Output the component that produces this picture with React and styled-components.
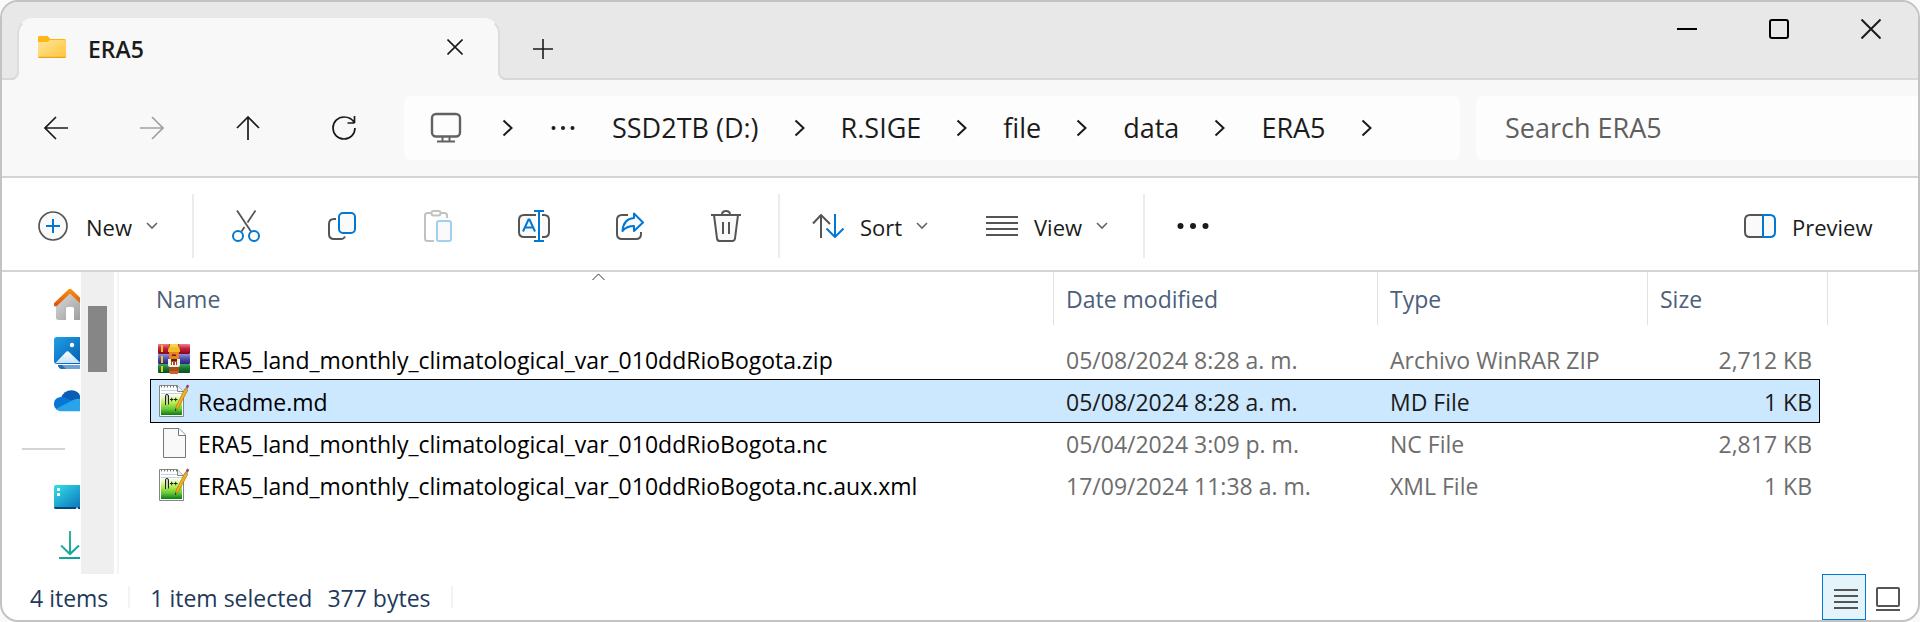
import React from "react";
import styled, { createGlobalStyle, css } from "styled-components";

const font = '"Open Sans", "Noto Sans", sans-serif';
const ink = "#1b1b1b";
const grey = "#555555";
const blue = "#0078d4";

const GlobalStyle = createGlobalStyle`
  *, *::before, *::after { box-sizing: border-box; }
  body { margin: 0; background: #fafafa; font: 22px/30px ${font}; color: ${ink}; }
  button, input { font: inherit; color: inherit; border: 0; padding: 0; background: none; }
  svg { display: block; flex: none; fill: none; }
`;

const Window = styled.div`
  display: flex;
  flex-direction: column;
  min-height: 100vh;
  border: 2px solid #c3c3c3;
  border-radius: 18px;
  background: #fff;
  overflow: hidden;
`;

/* Title bar */
const TitleBar = styled.header`
  display: flex;
  height: 78px;
  padding: 16px 1px 0 15px;
  background: #e8e8e8;
  box-shadow: inset 0 -2px 0 #d8d8d8;
`;

const Tab = styled.div`
  position: relative;
  display: flex;
  align-items: center;
  width: 483px;
  padding: 0 35px 6px 19px;
  background: #f8f8f8;
  border: 2px solid #dcdcdc;
  border-top-color: #f8f8f8;
  border-bottom: 0;
  border-radius: 16px 16px 0 0;

  &::before,
  &::after {
    content: "";
    position: absolute;
    bottom: 0;
    width: 10px;
    height: 10px;
    border-bottom: 2px solid #d8d8d8;
  }
  &::before {
    left: -10px;
    border-right: 2px solid #dcdcdc;
    border-bottom-right-radius: 8px;
    box-shadow: 3px 3px 0 #f8f8f8;
  }
  &::after {
    right: -10px;
    border-left: 2px solid #dcdcdc;
    border-bottom-left-radius: 8px;
    box-shadow: -3px 3px 0 #f8f8f8;
  }
`;

const TabTitle = styled.span`
  flex: 1;
  padding: 4px 0 0 22px;
  font-size: 23px;
  font-weight: 600;
`;

const IconButton = styled.button`
  display: flex;
  align-items: center;
  justify-content: center;
  width: ${(p) => p.$width || 96}px;
  color: ${(p) => p.$color || ink};
`;

const WindowControls = styled.div`
  display: flex;
  align-items: center;
  height: 22px;
  margin-left: auto;
`;

/* Navigation bar */
const NavBar = styled.nav`
  display: flex;
  height: 98px;
  padding: 16px 0 16px 6px;
  background: #f8f8f8;
  border-bottom: 2px solid #d4d4d4;
`;

const AddressBar = styled.div`
  display: flex;
  flex: 1;
  align-items: center;
  gap: 35px;
  margin: 0 16px 0 12px;
  padding-left: 25px;
  background: #fdfdfd;
  border-radius: 8px;
`;

const Crumb = styled.button`
  font-size: 27px;
  line-height: 36px;
  white-space: nowrap;
`;

const SearchBox = styled.input`
  width: 442px;
  padding-left: 29px;
  background: #fdfdfd;
  border-radius: 8px 0 0 8px;
  font-size: 27px;
  &::placeholder { color: #5f5f5f; opacity: 1; }
`;

/* Command bar */
const CommandBar = styled.div`
  display: flex;
  align-items: center;
  height: 94px;
  padding: 4px 0 0 36px;
  border-bottom: 2px solid #d4d4d4;
`;

const Command = styled.button`
  display: flex;
  align-items: center;
  width: ${(p) => p.$width}px;
  margin-left: ${(p) => (p.$end ? "auto" : 0)};
`;

const CommandLabel = styled.span`
  padding: 2px 14px 0 ${(p) => p.$gap || 16}px;
`;

const Divider = styled.span`
  width: 2px;
  height: 64px;
  margin: 0 ${(p) => p.$after || 0}px 0 ${(p) => p.$before || 0}px;
  background: #ececec;
`;

/* Content */
const Content = styled.main`
  display: flex;
  flex: 1;
  min-height: 302px;
`;

const Sidebar = styled.aside`
  display: flex;
  flex-direction: column;
  width: 78px;
  padding: 17px 0 0 52px;
  overflow: hidden;
`;

const Place = styled.a`
  display: block;
  height: ${(p) => p.$height}px;
`;

const SidebarRule = styled.hr`
  width: 43px;
  height: 2px;
  margin: 9px 0 35px -32px;
  border: 0;
  background: #d4d4d4;
`;

const ScrollTrack = styled.div`
  width: 33px;
  margin-left: 1px;
  padding: 34px 7px 0;
  background: #efefef;
`;

const ScrollThumb = styled.div`
  height: 66px;
  background: #868686;
`;

const ListPane = styled.section`
  flex: 1;
  margin-left: 3px;
  padding: 0 90px 0 31px;
  border-left: 2px solid #f5f5f5;
`;

const FileTable = styled.table`
  width: 100%;
  table-layout: fixed;
  border-spacing: 0;
  font-size: 23px;
`;

const Col = styled.col`
  width: ${(p) => (p.$width ? `${p.$width}px` : "auto")};
`;

const HeadCell = styled.th`
  position: relative;
  padding: 0 0 13px;
  font-weight: 400;
`;

const HeadButton = styled.button`
  display: block;
  width: 100%;
  height: 53px;
  padding: 0 0 0 ${(p) => (p.$first ? 6 : 12)}px;
  border-right: ${(p) => (p.$open ? "0" : "1px solid #e2e2e2")};
  color: #4c607a;
  text-align: left;
`;

const HeadEnd = styled.span`
  display: block;
  height: 53px;
  border-right: 1px solid #e2e2e2;
`;

const SortCaret = styled.svg`
  position: absolute;
  top: 1px;
  left: calc(50% - 10px);
`;

const Cell = styled.td`
  height: 42px;
  padding: 2px 8px 0 12px;
  color: #6d6d6d;
  white-space: nowrap;
  text-align: ${(p) => (p.$right ? "right" : "left")};
`;

const NameCell = styled(Cell)`
  padding: 0 0 0 7px;
  color: #000;
`;

const FileName = styled.span`
  display: flex;
  align-items: center;
  gap: 7px;
`;

const FileLabel = styled.span`
  padding-top: 2px;
`;

const FileRow = styled.tr`
  ${(p) =>
    p.$selected &&
    css`
      ${Cell} {
        background: #cce8ff;
        color: ${ink};
        box-shadow: 0 -1px 0 #000, 0 1px 0 #000;
      }
      ${Cell}:first-child { border-left: 1px solid #000; padding-left: 6px; color: #000; }
      ${Cell}:last-child { border-right: 1px solid #000; padding-right: 7px; }
    `}
`;

/* Status bar */
const StatusBar = styled.footer`
  display: flex;
  align-items: center;
  height: 46px;
  padding-left: 28px;
  color: #1e395b;
  font-size: 23px;
`;

const StatusText = styled.span`
  padding: 2px ${(p) => p.$after}px 0 0;
`;

const StatusDivider = styled.span`
  width: 2px;
  height: 22px;
  margin-right: 20px;
  background: #f3f3f3;
`;

const ViewSwitch = styled.div`
  display: flex;
  align-self: stretch;
  margin-left: auto;
  padding-right: 8px;
`;

const ViewButton = styled(IconButton)`
  width: 44px;
  padding: 4px 0 0 ${(p) => (p.$on ? 4 : 0)}px;
  ${(p) =>
    p.$on &&
    css`
      background: #e5f3fb;
      border: 1px solid ${blue};
    `}
`;

/* Line icons */
const Svg = ({ w, h, sw = 2, color = grey, children }) => (
  <svg width={w} height={h} viewBox={`0 0 ${w} ${h}`} stroke={color} strokeWidth={sw} aria-hidden="true">
    {children}
  </svg>
);

const FolderIcon = () => (
  <svg width="28" height="22" viewBox="0 0 28 22" aria-hidden="true">
    <defs>
      <linearGradient id="folder" x1="0" y1="0" x2="1" y2="1">
        <stop offset="0" stopColor="#ffe59a" />
        <stop offset="1" stopColor="#ffc638" />
      </linearGradient>
    </defs>
    <path d="M0 1.5Q0 0 1.5 0H9.500L12.500 3H26.500Q28 3 28 4.500V12H0z" fill="#fcb714" />
    <path d="M0 6H9.500L12 4H26.500Q28 4 28 5.500V20.500Q28 22 26.500 22H1.500Q0 22 0 20.500z" fill="url(#folder)" />
    <path d="M0.500 21.300H27.500" stroke="#eaa11c" strokeWidth="1.200" />
  </svg>
);

const CrossIcon = ({ size = 20, sw = 2 }) => (
  <Svg w={size} h={size} sw={sw} color={ink}><path d={`M0.500 0.500L${size - 0.5} ${size - 0.5}M${size - 0.5} 0.500L0.500 ${size - 0.5}`} /></Svg>
);
const PlusIcon = () => <Svg w={20} h={20} sw={1.6} color={ink}><path d="M0 10H20M10 0V20" /></Svg>;
const MinimizeIcon = () => <Svg w={20} h={20} color="#000"><path d="M0 10H20" /></Svg>;
const MaximizeIcon = () => <Svg w={20} h={20} color="#000"><rect x="1" y="1" width="18" height="18" rx="2" /></Svg>;

const BackIcon = () => <Svg w={24} h={24} sw={1.7} color="currentColor"><path d="M24 12H1M12 1L1 12L12 23" /></Svg>;
const ForwardIcon = () => <Svg w={24} h={24} sw={1.7} color="currentColor"><path d="M0 12H23M12 1L23 12L12 23" /></Svg>;
const UpIcon = () => <Svg w={24} h={24} sw={1.7} color="currentColor"><path d="M12 24V1M1 12L12 1L23 12" /></Svg>;
const RefreshIcon = () => (
  <Svg w={24} h={24} sw={1.7} color="currentColor"><path d="M22.500 7H15.500M22.500 0V7C20.500 3.300 17 1 12 1A11 11 0 1 0 23 12" /></Svg>
);
const MonitorIcon = () => (
  <Svg w={38} h={32} sw={2.4} color="#626262"><rect x="3" y="2" width="28" height="22.500" rx="4" /><path d="M13.500 25V29.500M20.500 25V29.500M8 29.500H26" strokeWidth="2" /></Svg>
);
const ChevronRight = () => <Svg w={12} h={18} color={ink}><path d="M1.500 1.500L9.500 9L1.500 16.500" /></Svg>;
const ChevronDown = () => <Svg w={12} h={8} sw={1.6} color="#666"><path d="M1 1L6 6L11 1" /></Svg>;
const Dots = ({ w, r }) => (
  <svg width={w} height="8" viewBox={`0 0 ${w} 8`} aria-hidden="true">
    {[r + 0.5, w / 2, w - r - 0.5].map((x) => <circle key={x} cx={x} cy="4" r={r} fill={ink} />)}
  </svg>
);

const NewIcon = () => (
  <Svg w={30} h={30}><circle cx="15" cy="15" r="14" fill="#fafafa" strokeWidth="1.700" /><path d="M8 15H22M15 8V22" stroke={blue} /></Svg>
);
const CutIcon = () => (
  <Svg w={30} h={32} sw={1.8}>
    <path d="M6 0.500L20 21.500M24.500 0.500L16.500 12.500M13.500 17L10.500 21.500" />
    <circle cx="7" cy="26" r="5" stroke={blue} strokeWidth="2" /><circle cx="23" cy="26" r="5" stroke={blue} strokeWidth="2" />
  </Svg>
);
const CopyIcon = () => (
  <Svg w={28} h={28}>
    <path d="M8 7H6Q1 7 1 12V22Q1 27 6 27H13Q16 27 17 24.500" />
    <rect x="11" y="1" width="16" height="20" rx="4" fill="#fafafa" stroke={blue} />
  </Svg>
);
const PasteIcon = () => (
  <Svg w={28} h={32} color="#c2c2c2">
    <path d="M8 3H3.500Q1 3 1 5.500V28.500Q1 31 3.500 31H10M16 3H20.500Q23 3 23 5.500V8" />
    <rect x="7.500" y="1" width="9" height="4.500" rx="2" />
    <rect x="13" y="11" width="14" height="20" rx="2" fill="#fafafa" stroke="#a3cfef" />
  </Svg>
);
const RenameIcon = () => (
  <Svg w={32} h={32}>
    <path d="M18 5H6Q1 5 1 10V22Q1 27 6 27H18M24 5H26Q31 5 31 10V22Q31 27 26 27H24" fill="#fafafa" />
    <path d="M5 21.500L10.500 9.500H11.500L17 21.500M7 17.500H15M16 1H26M21 1V31M16 31H26" stroke={blue} />
  </Svg>
);
const ShareIcon = () => (
  <Svg w={28} h={28}>
    <path d="M12 3H6Q1 3 1 8V22Q1 27 6 27H20Q25 27 25 22V20" />
    <path d="M18 1.500L27 10.500L18 19V14C12 14 9 16 6.500 19C7 11.500 11 6.500 18 6z" fill="#fafafa" stroke={blue} strokeLinejoin="round" />
  </Svg>
);
const TrashIcon = () => (
  <Svg w={30} h={32}>
    <path d="M3 5L6 28.500Q6.300 31 9 31H21Q23.700 31 24 28.500L27 5" fill="#fafafa" />
    <path d="M0 5H30M11 4.500Q11 1 15 1Q19 1 19 4.500M12 12V24M18 12V24" />
  </Svg>
);
const SortIcon = () => (
  <Svg w={32} h={24}><path d="M9 24V1M1 9.500L9 1L18 10" /><path d="M23 0V23M14.500 14.500L23 23L31.500 14.500" stroke={blue} /></Svg>
);
const LinesIcon = ({ w }) => <Svg w={w} h={20}><path d={`M0 1H${w}M0 7H${w}M0 13H${w}M0 19H${w}`} /></Svg>;
const PreviewIcon = () => (
  <Svg w={32} h={24}>
    <path d="M19 1H6Q1 1 1 6V18Q1 23 6 23H19" fill="#fafafa" />
    <path d="M19 1H26Q31 1 31 6V18Q31 23 26 23H19z" fill="#fafafa" stroke={blue} />
  </Svg>
);
const TileIcon = () => <Svg w={24} h={24}><rect x="1" y="1" width="22" height="18" rx="1" /><path d="M0 23H24" /></Svg>;

/* Sidebar icons */
const HomeIcon = () => (
  <svg width="32" height="32" viewBox="0 0 32 32" aria-hidden="true">
    <defs>
      <linearGradient id="wall" x1="0" y1="0" x2="1" y2="1"><stop offset="0" stopColor="#dcdcdc" /><stop offset="1" stopColor="#999" /></linearGradient>
      <linearGradient id="roof" x1="0" y1="0" x2="0" y2="1"><stop offset="0" stopColor="#f88a0c" /><stop offset="1" stopColor="#dc5810" /></linearGradient>
    </defs>
    <path d="M2 13L16 3L30 13V29Q30 31 28 31H20V19.500Q20 18 18.500 18H13.500Q12 18 12 19.500V31H4.500Q2 31 2 28.500z" fill="url(#wall)" />
    <path d="M1.500 15.500L16 1.800L30.500 15.500" stroke="url(#roof)" strokeWidth="4" strokeLinecap="round" strokeLinejoin="round" />
  </svg>
);
const GalleryIcon = () => (
  <svg width="32" height="32" viewBox="0 0 32 32" aria-hidden="true">
    <defs>
      <linearGradient id="photo" x1="0" y1="0" x2="1" y2="1"><stop offset="0" stopColor="#1fa0e6" /><stop offset="1" stopColor="#0559ad" /></linearGradient>
      <linearGradient id="hill" x1="0" y1="0" x2="0" y2="1"><stop offset="0" stopColor="#fff" /><stop offset="1" stopColor="#c3e2fa" /></linearGradient>
    </defs>
    <path d="M4 28H30V32H8Q4.500 32 4 28z" fill="#6da0d8" /><path d="M4 28H8L12 32H8Q4.500 32 4 28z" fill="#236cb4" />
    <rect width="30" height="27" rx="3" fill="url(#photo)" />
    <path d="M1.500 26L11.500 15.500Q13.500 13 15.500 15.500L26.500 26z" fill="url(#hill)" />
    <circle cx="18" cy="8" r="2.200" fill="#fff" />
  </svg>
);
const CloudIcon = () => (
  <svg width="32" height="22" viewBox="0 0 32 22" aria-hidden="true">
    <path d="M7 8Q10 0 18 0.300Q25 1 27 8L22 15L8 12z" fill="#0a5cb5" />
    <path d="M0 15Q-0.500 8 6.500 7Q10 6 14 9L22 13L4 20Q0.500 18.500 0 15z" fill="#0876d3" />
    <path d="M2 19L18 10.500Q22 8 27 9Q32 11 32 16Q31 21 27 21.300H7Q4 21.300 2 19z" fill="#29a3ea" />
  </svg>
);
const DesktopIcon = () => (
  <svg width="32" height="24" viewBox="0 0 32 24" aria-hidden="true">
    <defs><linearGradient id="desk" x1="0" y1="0" x2="1" y2="1"><stop offset="0" stopColor="#35dfe5" /><stop offset="1" stopColor="#0667ba" /></linearGradient></defs>
    <rect width="32" height="24" rx="2" fill="url(#desk)" />
    <path d="M0 22H32V24H2Q0 24 0 22z" fill="#07477c" />
    <path d="M3 3H6V6H3zM3 8H6V11H3z" fill="#e8ffff" /><path d="M22 22.500H24V24H22z" fill="#d3e4f2" />
  </svg>
);
const DownloadIcon = () => (
  <svg width="32" height="28" viewBox="0 0 32 28" aria-hidden="true">
    <defs><linearGradient id="down" gradientUnits="userSpaceOnUse" x1="5" y1="0" x2="27" y2="28"><stop offset="0" stopColor="#33c190" /><stop offset="1" stopColor="#089aa0" /></linearGradient></defs>
    <path d="M16 0V23M7 14.500L16 23L25 14.500M5 27H27" stroke="url(#down)" strokeWidth="2" />
  </svg>
);

/* File type icons */
const ZipIcon = () => (
  <svg width="34" height="32" viewBox="0 0 34 32" aria-hidden="true">
    <defs>
      <linearGradient id="red" x1="0" y1="0" x2="0" y2="1"><stop offset="0" stopColor="#f08196" /><stop offset=".45" stopColor="#c81f3b" /><stop offset="1" stopColor="#7c0a20" /></linearGradient>
      <linearGradient id="violet" x1="0" y1="0" x2="0" y2="1"><stop offset="0" stopColor="#9292dc" /><stop offset=".5" stopColor="#4c4cae" /><stop offset="1" stopColor="#26266e" /></linearGradient>
      <linearGradient id="green" x1="0" y1="0" x2="0" y2="1"><stop offset="0" stopColor="#48a45e" /><stop offset=".5" stopColor="#107a33" /><stop offset="1" stopColor="#064e1c" /></linearGradient>
    </defs>
    <rect x="1" y="1" width="32" height="10" rx="1" fill="url(#red)" />
    <rect x="1" y="11" width="32" height="10" rx="1" fill="url(#violet)" />
    <rect x="1" y="21" width="32" height="9" rx="1" fill="url(#green)" />
    <path d="M5 2V9M5 13V20M5 23V29" stroke="#f3c51e" strokeWidth="2" />
    <path d="M12 1H22V30H12z" fill="#a84c1c" />
    <path d="M11 8Q11 2 17 2Q23 2 23 8V9H11z" fill="#f4bd24" /><path d="M13 1H21V4H13z" fill="#f7d354" />
    <path d="M12 9H22V14Q22 18 17 18Q12 18 12 14z" fill="#e78322" />
    <path d="M15 11.500H19V13H15zM14 16H20V18H14z" fill="#61230c" />
    <path d="M11 16H14V22H20V16H23V22Q23 24 20 24H14Q11 24 11 22z" fill="#f2efea" />
    <path d="M15.500 19V22M18.500 19V22" stroke="#fff" />
    <path d="M13 28H21V31H13z" fill="#c5632b" />
  </svg>
);
const NoteIcon = () => (
  <svg width="34" height="34" viewBox="0 0 34 34" aria-hidden="true">
    <defs><linearGradient id="note" x1="0" y1="0" x2="0" y2="1"><stop offset=".05" stopColor="#f4fdd5" /><stop offset=".4" stopColor="#b5ee45" /><stop offset=".7" stopColor="#66c93a" /><stop offset="1" stopColor="#087d10" /></linearGradient></defs>
    <path d="M2.500 1.500H20.500L26.500 7.500V32.500H2.500z" fill="#fff" stroke="#858585" />
    <path d="M4 6.500H20M4 9.500H25M4 12.500H25" stroke="#bfd6df" />
    <rect x="4" y="11" width="21" height="20" fill="url(#note)" />
    <path d="M20.500 1.500V7.500H26.500" fill="#eee" stroke="#858585" />
    <path d="M4 2.500H20" stroke="#777" strokeWidth="2" strokeDasharray="1 2" />
    <path d="M9 11H11V20H9z" fill="#c9d0c2" />
    <path d="M8.500 21V11.500Q8.500 10.500 10 10.500Q11.500 10.500 11.500 12V20.500" stroke="#222" />
    <path d="M13 15.500H16.500M14.700 13.700V17.300M17 15.500H20.500M18.700 13.700V17.300" stroke="#222" />
    <path d="M28 4.500L30.800 6L21.500 23.500L18.500 26.500L19.300 22z" fill="#efb322" stroke="#a9740b" strokeWidth=".7" />
    <path d="M28.800 3.500L30.800 4.600" stroke="#9e9e9e" strokeWidth="3" /><path d="M29.500 1.800L31.500 3" stroke="#a53b4c" strokeWidth="3" />
    <path d="M18.500 27L18.700 24.500" stroke="#333" />
  </svg>
);
const BlankIcon = () => (
  <svg width="34" height="32" viewBox="0 0 34 32" aria-hidden="true">
    <path d="M6.500 1.500H22L28.500 8V30.500H6.500z" fill="#f9f9f9" stroke="#777" />
    <path d="M21.500 1.500V8.500H28.500" fill="#fff" stroke="#777" />
  </svg>
);

const crumbs = ["SSD2TB (D:)", "R.SIGE", "file", "data", "ERA5"];
const places = [
  ["Home", HomeIcon, 48],
  ["Gallery", GalleryIcon, 53],
  ["OneDrive", CloudIcon, 49],
];
const pinned = [
  ["Desktop", DesktopIcon, 46],
  ["Downloads", DownloadIcon, 28],
];
const files = [
  { icon: ZipIcon, name: "ERA5_land_monthly_climatological_var_010ddRioBogota.zip", date: "05/08/2024 8:28 a. m.", type: "Archivo WinRAR ZIP", size: "2,712 KB" },
  { icon: NoteIcon, name: "Readme.md", date: "05/08/2024 8:28 a. m.", type: "MD File", size: "1 KB", selected: true },
  { icon: BlankIcon, name: "ERA5_land_monthly_climatological_var_010ddRioBogota.nc", date: "05/04/2024 3:09 p. m.", type: "NC File", size: "2,817 KB" },
  { icon: NoteIcon, name: "ERA5_land_monthly_climatological_var_010ddRioBogota.nc.aux.xml", date: "17/09/2024 11:38 a. m.", type: "XML File", size: "1 KB" },
];
const actions = [
  ["Cut", CutIcon],
  ["Copy", CopyIcon],
  ["Paste", PasteIcon],
  ["Rename", RenameIcon],
  ["Share", ShareIcon],
  ["Delete", TrashIcon],
];

const placeLink = ([label, Icon, height]) => (
  <Place key={label} href="#" aria-label={label} $height={height}><Icon /></Place>
);

export default function App() {
  return (
    <>
      <GlobalStyle />
      <Window>
        <TitleBar>
          <Tab>
            <FolderIcon />
            <TabTitle>ERA5</TabTitle>
            <IconButton $width={16} aria-label="Close tab"><CrossIcon size={16} sw={1.6} /></IconButton>
          </Tab>
          <IconButton $width={86} aria-label="New tab"><PlusIcon /></IconButton>
          <WindowControls>
            <IconButton $width={92} aria-label="Minimize"><MinimizeIcon /></IconButton>
            <IconButton $width={92} aria-label="Maximize"><MaximizeIcon /></IconButton>
            <IconButton $width={92} aria-label="Close"><CrossIcon /></IconButton>
          </WindowControls>
        </TitleBar>

        <NavBar>
          <IconButton aria-label="Back"><BackIcon /></IconButton>
          <IconButton aria-label="Forward" $color="#a0a0a0"><ForwardIcon /></IconButton>
          <IconButton aria-label="Up"><UpIcon /></IconButton>
          <IconButton aria-label="Refresh"><RefreshIcon /></IconButton>
          <AddressBar>
            <MonitorIcon />
            <ChevronRight />
            <IconButton $width={28} aria-label="More folders"><Dots w={24} r={2} /></IconButton>
            {crumbs.map((name) => (
              <React.Fragment key={name}>
                <Crumb>{name}</Crumb>
                <ChevronRight />
              </React.Fragment>
            ))}
          </AddressBar>
          <SearchBox type="search" placeholder="Search ERA5" aria-label="Search ERA5" />
        </NavBar>

        <CommandBar>
          <Command $width={154}><NewIcon /><CommandLabel $gap={18}>New</CommandLabel><ChevronDown /></Command>
          <Divider $after={4} />
          {actions.map(([label, Icon]) => (
            <IconButton key={label} aria-label={label}><Icon /></IconButton>
          ))}
          <Divider $before={4} $after={32} />
          <Command $width={174}><SortIcon /><CommandLabel>Sort</CommandLabel><ChevronDown /></Command>
          <Command $width={157}><LinesIcon w={32} /><CommandLabel>View</CommandLabel><ChevronDown /></Command>
          <Divider />
          <IconButton aria-label="See more"><Dots w={32} r={3} /></IconButton>
          <Command $width={174} $end><PreviewIcon /><CommandLabel>Preview</CommandLabel></Command>
        </CommandBar>

        <Content>
          <Sidebar>
            {places.map(placeLink)}
            <SidebarRule />
            {pinned.map(placeLink)}
          </Sidebar>
          <ScrollTrack><ScrollThumb /></ScrollTrack>
          <ListPane>
            <FileTable>
              <colgroup><Col /><Col $width={324} /><Col $width={270} /><Col $width={172} /><Col $width={8} /></colgroup>
              <thead>
                <tr>
                  <HeadCell>
                    <SortCaret width="13" height="8" viewBox="0 0 13 8" stroke="#333" aria-hidden="true"><path d="M0.500 7L6.500 1L12.500 7" /></SortCaret>
                    <HeadButton $first>Name</HeadButton>
                  </HeadCell>
                  <HeadCell><HeadButton>Date modified</HeadButton></HeadCell>
                  <HeadCell><HeadButton>Type</HeadButton></HeadCell>
                  <HeadCell><HeadButton $open>Size</HeadButton></HeadCell>
                  <HeadCell as="td"><HeadEnd /></HeadCell>
                </tr>
              </thead>
              <tbody>
                {files.map(({ icon: Icon, name, date, type, size, selected }) => (
                  <FileRow key={name} $selected={selected}>
                    <NameCell><FileName><Icon /><FileLabel>{name}</FileLabel></FileName></NameCell>
                    <Cell>{date}</Cell>
                    <Cell>{type}</Cell>
                    <Cell $right>{size}</Cell>
                  </FileRow>
                ))}
              </tbody>
            </FileTable>
          </ListPane>
        </Content>

        <StatusBar>
          <StatusText $after={20}>4 items</StatusText>
          <StatusDivider />
          <StatusText $after={15}>1 item selected</StatusText>
          <StatusText $after={20}>377 bytes</StatusText>
          <StatusDivider />
          <ViewSwitch>
            <ViewButton $on aria-label="Details view"><LinesIcon w={24} /></ViewButton>
            <ViewButton aria-label="Large icons view"><TileIcon /></ViewButton>
          </ViewSwitch>
        </StatusBar>
      </Window>
    </>
  );
}
